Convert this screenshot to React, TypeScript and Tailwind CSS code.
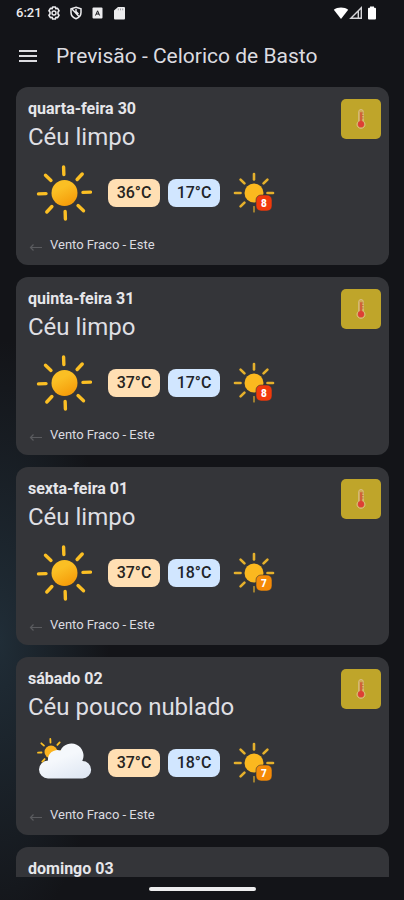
// daily forecast screen: status bar, title bar and one card per day

interface Forecast {
    sky: string,
    cloudy: boolean,
    max: number,
    min: number,
    uv: number,
    wind: string
}

interface Day {
    name: string,
    forecast?: Forecast // missing until the day has been loaded
}

const days: Day[] = [
    { name: "quarta-feira 30", forecast: { sky: "Céu limpo", cloudy: false, max: 36, min: 17, uv: 8, wind: "Vento Fraco - Este" } },
    { name: "quinta-feira 31", forecast: { sky: "Céu limpo", cloudy: false, max: 37, min: 17, uv: 8, wind: "Vento Fraco - Este" } },
    { name: "sexta-feira 01", forecast: { sky: "Céu limpo", cloudy: false, max: 37, min: 18, uv: 7, wind: "Vento Fraco - Este" } },
    { name: "sábado 02", forecast: { sky: "Céu pouco nublado", cloudy: true, max: 37, min: 18, uv: 7, wind: "Vento Fraco - Este" } },
    { name: "domingo 03" },
];

const angles = [0, 45, 90, 135, 180, 225, 270, 315];

function SunIcon() {
    return (
        <svg className="size-14 shrink-0" viewBox="-28.5 -28 56 56" aria-hidden="true">
            <defs>
                <linearGradient id="sun" x1="0" y1="0" x2="0.5" y2="1">
                    <stop offset="0.4" stopColor="#fbbf24" />
                    <stop offset="1" stopColor="#f59e0b" />
                </linearGradient>
            </defs>
            <circle r="13" fill="url(#sun)" />
            {angles.map((a) => (
                <line key={a} y1="-18.5" y2="-26" stroke="#fbbf24" strokeWidth="3.4" strokeLinecap="round" transform={`rotate(${a - 2})`} />
            ))}
        </svg>
    );
}

function CloudIcon() {
    return (
        <svg className="size-14 shrink-0" viewBox="0 0 56 56" aria-hidden="true">
            <defs>
                <linearGradient id="cloud" x1="0.2" y1="0" x2="0.8" y2="1">
                    <stop offset="0.4" stopColor="#f5f8fc" />
                    <stop offset="1" stopColor="#dfe7f3" />
                </linearGradient>
            </defs>
            <g transform="translate(15 17)">
                <circle r="6.5" fill="#fbb31f" />
                {angles.map((a) => (
                    <line key={a} y1="-9.5" y2="-13" stroke="#fbbf24" strokeWidth="1.8" strokeLinecap="round" transform={`rotate(${a - 3})`} />
                ))}
            </g>
            <path
                d="M12 43.500H46.500A8.700 8.700 0 0 0 46.300 26A11.800 11.800 0 0 0 24.500 15.500A9.500 9.500 0 0 0 12 25.500A9 9 0 0 0 12 43.500Z"
                fill="url(#cloud)"
            />
        </svg>
    );
}

// small sun with the uv index in its corner
function UvIcon({ uv }: { uv: number }) {
    return (
        <svg className="size-11 shrink-0" viewBox="-22 -22 44 44" role="img" aria-label={`Índice UV ${uv}`}>
            <circle r="9.500" fill="#fbb81f" />
            {angles.map((a) => (
                <line key={a} y1="-13.500" y2="-19" stroke="#e5b02c" strokeWidth={a === 180 ? 1.2 : 2.6} strokeLinecap="round" transform={`rotate(${a})`} />
            ))}
            <rect x="2" y="2" width="16" height="16" rx="5" fill={uv > 7 ? "#f13a0b" : "#f58a07"} stroke="#343539" strokeWidth="0.600" />
            <text x="10" y="13.500" textAnchor="middle" fill="#ffffff" className="font-['Roboto',sans-serif] text-[10px] font-black">{uv}</text>
        </svg>
    );
}

function HeatBadge() {
    return (
        <div className="flex size-10 shrink-0 items-center justify-center rounded-[5px] bg-[#bfa52a]">
            <svg className="h-5 w-3" viewBox="0 0 12 20" role="img" aria-label="Aviso de calor">
                <path d="M3.700 2.800a2.300 2.300 0 0 1 4.600 0v9.300a4 4 0 1 1-4.600 0z" fill="#d0a650" stroke="#d8bd83" strokeWidth="1" />
                <rect x="5" y="3" width="2" height="11" rx="1" fill="#d2603a" />
                <circle cx="6" cy="15.200" r="3.100" fill="#de3f35" />
                <path d="M7 4h1.500M7 6.500h1.500M7 9h1.500" stroke="#c0673a" strokeWidth="0.900" />
            </svg>
        </div>
    );
}

function DayCard({ day }: { day: Day }) {
    const { name, forecast } = day;
    return (
        <li className="min-h-[178px] shrink-0 rounded-xl bg-[#343539] py-3 pr-2 pl-3">
            <div className="flex items-start justify-between">
                <div>
                    <h2 className="text-base leading-5 font-bold text-[#e6e6ea]">{name}</h2>
                    {forecast && <p className="text-2xl leading-9 text-[#dfdfe3]">{forecast.sky}</p>}
                </div>
                {forecast && <HeatBadge />}
            </div>
            {forecast && (
                <>
                    <div className="flex h-19 items-center pl-2">
                        {forecast.cloudy ? <CloudIcon /> : <SunIcon />}
                        <span className="ml-4 flex h-7 w-13 items-center justify-center rounded-lg bg-[#ffdfb3] text-base font-medium text-[#262420]">{forecast.max}°C</span>
                        <span className="mr-3 ml-2 flex h-7 w-13 items-center justify-center rounded-lg bg-[#d1e6ff] text-base font-medium text-[#20242a]">{forecast.min}°C</span>
                        <UvIcon uv={forecast.uv} />
                    </div>
                    <p className="mt-1.5 flex items-center gap-1.5 text-[13px] leading-4 text-[#dcdce0]">
                        <svg className="h-4 w-4" viewBox="0 0 16 16" fill="none" stroke="#5a5b5f" strokeWidth="1.2" aria-hidden="true">
                            <path d="M14 10.500H2.500M5.500 7.500L2.500 10.500l3 3" />
                        </svg>
                        {forecast.wind}
                    </p>
                </>
            )}
        </li>
    );
}

function StatusBar() {
    return (
        <div className="flex h-[25px] shrink-0 items-center justify-between pr-[27px] pl-4 text-[#ececee]">
            <div className="flex items-center">
                <span className="w-[31px] text-[13px] font-medium">6:21</span>
                <svg className="size-3.5" viewBox="0 0 14 14" fill="none" stroke="currentColor" aria-hidden="true">
                    <path d="M5.600 1h2.800l.5 1.700 1.700-.4 1.500 2.500L11 6v2l1.100 1.200-1.500 2.500-1.700-.4-.5 1.700H5.600l-.5-1.700-1.700.4-1.500-2.500L3 8V6L1.900 4.800l1.500-2.500 1.700.4z" strokeWidth="1.600" strokeLinejoin="round" />
                    <circle cx="7" cy="7" r="2" strokeWidth="1.400" />
                </svg>
                <svg className="ml-2 size-3.5" viewBox="0 0 14 14" fill="none" stroke="currentColor" aria-hidden="true">
                    <path d="M7 1.200l5 1.700v3.600c0 3-2 5.200-5 6.300-3-1.100-5-3.300-5-6.300V2.900z" strokeWidth="1.500" />
                    <path d="M3 3l7 7.500M7 3v2.500l2.500 2.500" strokeWidth="1.400" />
                </svg>
                <svg className="ml-2 size-3.5" viewBox="0 0 14 14" aria-hidden="true">
                    <rect x="1.500" y="1.500" width="10" height="11" rx="1" fill="currentColor" />
                    <path d="M4.500 9.500L6.600 4.800l2 4.700M5.300 8h2.700" stroke="#15161a" strokeWidth="1" fill="none" />
                </svg>
                <svg className="ml-2 size-3.5" viewBox="0 0 14 14" aria-hidden="true">
                    <path d="M5 1h6a1 1 0 0 1 1 1v10.500a1 1 0 0 1-1 1H2a1 1 0 0 1-1-1V4.500z" fill="currentColor" />
                    <path d="M5.300 2.500v1.800M7.500 2.500v1.800M9.700 2.500v1.800" stroke="#8d8e92" strokeWidth="0.800" />
                </svg>
            </div>
            <div className="flex items-center text-white">
                <svg className="h-3.5 w-4" viewBox="0 0 16 14" aria-hidden="true">
                    <path d="M8 13L.8 3.800C4.500.6 11.500.6 15.200 3.800z" fill="currentColor" />
                </svg>
                <svg className="h-3.5 w-3.5" viewBox="0 0 14 14" fill="none" stroke="#d5d5d8" strokeWidth="1.400" aria-hidden="true">
                    <path d="M12.300 1.800v10.500H1.800zM9.300 5v7" />
                </svg>
                <svg className="ml-1 h-3.5 w-2.5" viewBox="0 0 10 14" aria-hidden="true">
                    <path d="M3 .5h4v1.300h1a1 1 0 0 1 1 1v9.700a1 1 0 0 1-1 1H2a1 1 0 0 1-1-1V2.800a1 1 0 0 1 1-1h1z" fill="currentColor" />
                </svg>
            </div>
        </div>
    );
}

export default function App() {
    return (
        <div className="flex h-screen flex-col bg-[#131418] bg-[radial-gradient(ellipse_110px_300px_at_0_640px,#202d37,#131418)] font-['Roboto',sans-serif]">
            <StatusBar />
            <header className="flex h-[62px] shrink-0 items-center gap-4 pl-4">
                <button aria-label="Menu" className="flex size-6 items-center justify-center">
                    <svg className="size-6" viewBox="0 0 24 24" stroke="#dcdce0" strokeWidth="2" aria-hidden="true">
                        <path d="M3 7h18M3 12h18M3 17h18" />
                    </svg>
                </button>
                <h1 className="text-[21px] leading-7 text-[#dcdce0]">Previsão - Celorico de Basto</h1>
            </header>
            <main className="min-h-0 flex-1 overflow-hidden pr-[15px] pl-4">
                <ul className="flex flex-col gap-3">
                    {days.map((day) => <DayCard key={day.name} day={day} />)}
                </ul>
            </main>
            {/* gesture handle */}
            <div className="flex h-[23px] shrink-0 items-center justify-center">
                <div className="h-1 w-[107px] rounded-full bg-[#ededee]" />
            </div>
        </div>
    );
}
